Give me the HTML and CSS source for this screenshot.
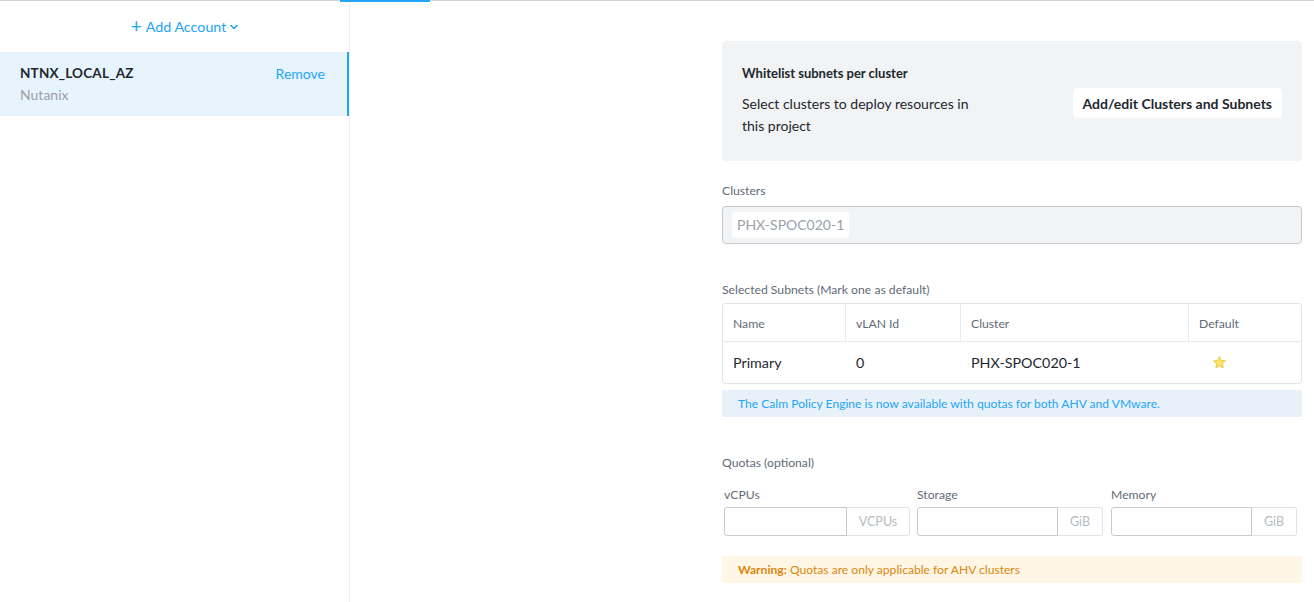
FILE: index.html
```html
<!DOCTYPE html>
<html>
<head>
<meta charset="utf-8">
<link rel="stylesheet" href="styles.css">
</head>
<body>
<div class="topline"><div class="tab-indicator"></div></div>
<div class="layout">
  <aside class="sidebar">
    <div class="add-account"><span class="plus">+</span> Add Account <svg class="chev" width="8" height="6" viewBox="0 0 8 6"><path d="M1 1.5 L4 4.5 L7 1.5" fill="none" stroke="#22a5f7" stroke-width="1.6" stroke-linecap="round" stroke-linejoin="round"/></svg></div>
    <div class="account selected">
      <div class="account-row">
        <span class="account-name">NTNX_LOCAL_AZ</span>
        <span class="remove">Remove</span>
      </div>
      <div class="account-type">Nutanix</div>
    </div>
  </aside>
  <main class="main">
    <div class="form">
      <section class="whitelist">
        <div class="wl-title">Whitelist subnets per cluster</div>
        <div class="wl-row">
          <div class="wl-text">Select clusters to deploy resources in this project</div>
          <button class="wl-btn">Add/edit Clusters and Subnets</button>
        </div>
      </section>

      <div class="field-label clusters-label">Clusters</div>
      <div class="cluster-box"><span class="chip">PHX-SPOC020-1</span></div>

      <div class="field-label subnets-label">Selected Subnets (Mark one as default)</div>
      <table class="subnets">
        <thead>
          <tr><th class="c1">Name</th><th class="c2">vLAN Id</th><th class="c3">Cluster</th><th class="c4">Default</th></tr>
        </thead>
        <tbody>
          <tr><td>Primary</td><td>0</td><td>PHX-SPOC020-1</td><td class="star-cell"><svg width="15" height="15" viewBox="0 0 24 24"><path d="M12 2.5 L14.9 8.6 L21.5 9.4 L16.6 13.9 L17.9 20.5 L12 17.2 L6.1 20.5 L7.4 13.9 L2.5 9.4 L9.1 8.6 Z" fill="#fde26a" stroke="#e8b923" stroke-width="1.2" stroke-linejoin="round"/></svg></td></tr>
        </tbody>
      </table>
      <div class="info-bar">The Calm Policy Engine is now available with quotas for both AHV and VMware.</div>

      <div class="field-label quotas-label">Quotas (optional)</div>
      <div class="quotas">
        <div class="quota q-cpu">
          <div class="q-label">vCPUs</div>
          <div class="q-group"><div class="q-input"></div><div class="q-addon">VCPUs</div></div>
        </div>
        <div class="quota q-storage">
          <div class="q-label">Storage</div>
          <div class="q-group"><div class="q-input"></div><div class="q-addon">GiB</div></div>
        </div>
        <div class="quota q-mem">
          <div class="q-label">Memory</div>
          <div class="q-group"><div class="q-input"></div><div class="q-addon">GiB</div></div>
        </div>
      </div>
      <div class="warning-bar"><b>Warning:</b> Quotas are only applicable for AHV clusters</div>
    </div>
  </main>
</div>
</body>
</html>
```

FILE: styles.css
```css
* { box-sizing: border-box; }
html, body { margin: 0; padding: 0; }
body {
  font-family: "Lato", "Liberation Sans", sans-serif;
  color: #22272e;
  background: #fff;
  width: 1314px;
  height: 602px;
  overflow: hidden;
}
.topline {
  height: 1px;
  background: #cfd2d6;
  position: relative;
}
.tab-indicator {
  position: absolute;
  left: 340px;
  top: 0;
  width: 90px;
  height: 2px;
  background: #22a5f7;
}
.layout {
  display: flex;
  height: 601px;
}
.sidebar {
  width: 350px;
  border-right: 1px solid #eceef0;
  flex: none;
}
.add-account {
  height: 51px;
  display: flex;
  align-items: center;
  justify-content: center;
  gap: 4px;
  color: #22a5f7;
  font-size: 14.3px;
  padding: 0 0 1px 20px;
}
.add-account .plus { font-size: 19px; line-height: 1; margin-top: -2px; }
.add-account .chev { margin-left: 0; margin-top: 1px; }
.account {
  height: 64px;
  padding: 12px 22px 0 20px;
}
.account.selected {
  background: #e8f4fd;
  border-right: 2px solid #22a5f7;
}
.account-row {
  display: flex;
  justify-content: space-between;
  align-items: center;
  height: 18px;
}
.account-name { font-size: 13.5px; font-weight: 700; letter-spacing: 0.2px; color: #22272e; }
.remove { color: #22a5f7; font-size: 14px; }
.account-type { color: #9a9ea4; font-size: 14px; margin-top: 4px; }

.main {
  flex: 1;
  display: flex;
  justify-content: flex-end;
  padding: 40px 12px 0 0;
}
.form { width: 580px; }

.whitelist {
  background: #f2f3f5;
  border-radius: 4px;
  height: 120px;
  padding: 24px 20px 0 20px;
}
.wl-title { font-size: 13px; font-weight: 700; color: #22272e; line-height: 16px; }
.wl-row {
  display: flex;
  justify-content: space-between;
  align-items: flex-start;
  margin-top: 12px;
}
.wl-text { width: 240px; font-size: 14px; line-height: 22px; color: #22272e; }
.wl-btn {
  margin-top: -5px;
  background: #fff;
  border: none;
  border-radius: 4px;
  height: 30px;
  padding: 0 10px;
  font-family: inherit;
  font-size: 14px;
  font-weight: 700;
  color: #22272e;
}

.field-label { font-size: 12.2px; color: #5f6b78; line-height: 14px; }
.clusters-label { margin-top: 23px; }
.cluster-box {
  margin-top: 8px;
  height: 38px;
  background: #f2f3f5;
  border: 1px solid #c5cad0;
  border-radius: 4px;
  padding: 5px 9px;
}
.chip {
  display: inline-block;
  background: #fff;
  border-radius: 3px;
  height: 26px;
  line-height: 26px;
  padding: 0 5px;
  color: #9aa1a9;
  font-size: 14px;
}
.subnets-label { margin-top: 39px; }
.subnets {
  margin-top: 6px;
  width: 580px;
  border-collapse: separate;
  border-spacing: 0;
  border: 1px solid #e3e6e9;
  border-radius: 3px;
  table-layout: fixed;
}
.subnets th {
  font-weight: 400;
  font-size: 12.2px;
  color: #5f6b78;
  text-align: left;
  height: 38px;
  padding: 1px 10px 0;
  border-bottom: 1px solid #e8eaed;
  border-right: 1px solid #e8eaed;
}
.subnets th:last-child { border-right: none; }
.subnets th.c1 { width: 123px; }
.subnets th.c2 { width: 115px; }
.subnets th.c3 { width: 228px; }
.subnets td {
  height: 41px;
  padding: 0 10px;
  font-size: 14.3px;
  color: #22272e;
}
.subnets td.star-cell { padding-left: 23px; padding-top: 3px; }
.info-bar {
  margin-top: 6px;
  height: 27px;
  background: #e8f1fa;
  color: #22a5f7;
  font-size: 12.1px;
  line-height: 27px;
  padding-left: 16px;
}
.quotas-label { margin-top: 39px; }
.quotas {
  display: flex;
  margin-top: 19px;
  padding-left: 2px;
}
.quota { flex: none; }
.q-cpu { width: 193px; }
.q-storage { width: 194px; }
.q-label { font-size: 12.2px; color: #5f6b78; line-height: 12px; }
.q-group { display: flex; margin-top: 6px; height: 29px; }
.q-input {
  border: 1px solid #c5cad0;
  border-radius: 3px 0 0 3px;
  height: 29px;
}
.q-addon {
  border: 1px solid #dfe2e6;
  border-left: none;
  border-radius: 0 3px 3px 0;
  height: 29px;
  color: #b5bbc2;
  font-size: 12.5px;
  display: flex;
  align-items: center;
  justify-content: center;
}
.q-cpu .q-input { width: 123px; }
.q-cpu .q-addon { width: 63px; }
.q-storage .q-input { width: 141px; }
.q-storage .q-addon { width: 45px; }
.q-mem .q-input { width: 141px; }
.q-mem .q-addon { width: 45px; }
.warning-bar {
  margin-top: 20px;
  height: 27px;
  background: #fff6e6;
  border-radius: 3px;
  color: #d9870c;
  font-size: 12.1px;
  line-height: 27px;
  padding-left: 16px;
}
.warning-bar b { font-weight: 700; }
```
